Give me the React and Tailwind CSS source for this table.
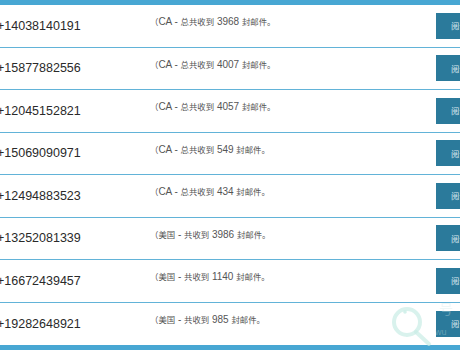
import React from "react";

const rows = [
  ["+14038140191", "CA", "总共收到", "3968"],
  ["+15877882556", "CA", "总共收到", "4007"],
  ["+12045152821", "CA", "总共收到", "4057"],
  ["+15069090971", "CA", "总共收到", "549"],
  ["+12494883523", "CA", "总共收到", "434"],
  ["+13252081339", "美国", "共收到", "3986"],
  ["+16672439457", "美国", "共收到", "1140"],
  ["+19282648921", "美国", "共收到", "985"],
];

const cjk = "text-[8.4px] [font-family:'Noto_Sans_CJK_SC',sans-serif]";

function Region({ name }) {
  if (name === "CA") return <span>CA</span>;
  return <span className={cjk}>{name}</span>;
}

export default function App() {
  return (
    <div className="relative w-[460px] h-[350px] overflow-hidden bg-white [font-family:'Liberation_Sans','Noto_Sans_CJK_SC',sans-serif]">
      <div className="h-[5px] bg-[#48a7d3]" />
      {rows.map(([phone, region, verb, count], i) => (
        <div
          key={phone}
          className={`flex items-stretch h-[42.5px] ${i < rows.length - 1 ? "border-b border-[#62b3d8]" : ""}`}
        >
          <div className="w-[153px] ml-[-3px] shrink-0 flex items-center pt-[1px] text-[12.5px] text-[#2a2a2a]">
            {phone}
          </div>
          <div className="flex-1 pt-[10px] text-[10px] leading-[12px] text-[#555] whitespace-nowrap">
            <span className={cjk}>（</span>
            <Region name={region} />
            <span> - </span>
            <span className={cjk}>{verb}</span>
            <span> {count} </span>
            <span className={cjk}>封邮件。</span>
          </div>
          <div className="w-[24px] shrink-0 flex items-center">
            <div className="h-[26px] w-[24px] bg-[#2b7a9b] overflow-hidden whitespace-nowrap pl-[15px] flex items-center text-[8.4px] text-[#dce9f0] [font-family:'Noto_Sans_CJK_SC',sans-serif]">
              阅读邮件
            </div>
          </div>
        </div>
      ))}
      <div className="h-[6px] bg-[#48a7d3]" />
      <svg
        className="absolute left-[385px] top-[298px] pointer-events-none"
        width="75"
        height="50"
        viewBox="0 0 75 50"
      >
        <circle cx="22" cy="24" r="13" fill="none" stroke="#c9ede6" strokeOpacity="0.7" strokeWidth="4" />
        <circle cx="20" cy="14" r="1.8" fill="#c9ede6" fillOpacity="0.8" />
        <line x1="31" y1="34" x2="44" y2="46" stroke="#c9ede6" strokeOpacity="0.7" strokeWidth="4" strokeLinecap="round" />
        <text x="50" y="37" fontSize="9" fill="#cfe8e6" fillOpacity="0.35" fontFamily="Liberation Sans, sans-serif">wu</text>
        <text x="54" y="16" fontSize="14" fill="#cfe8e6" fillOpacity="0.35" fontFamily="Noto Sans CJK SC, sans-serif">号</text>
      </svg>
    </div>
  );
}
